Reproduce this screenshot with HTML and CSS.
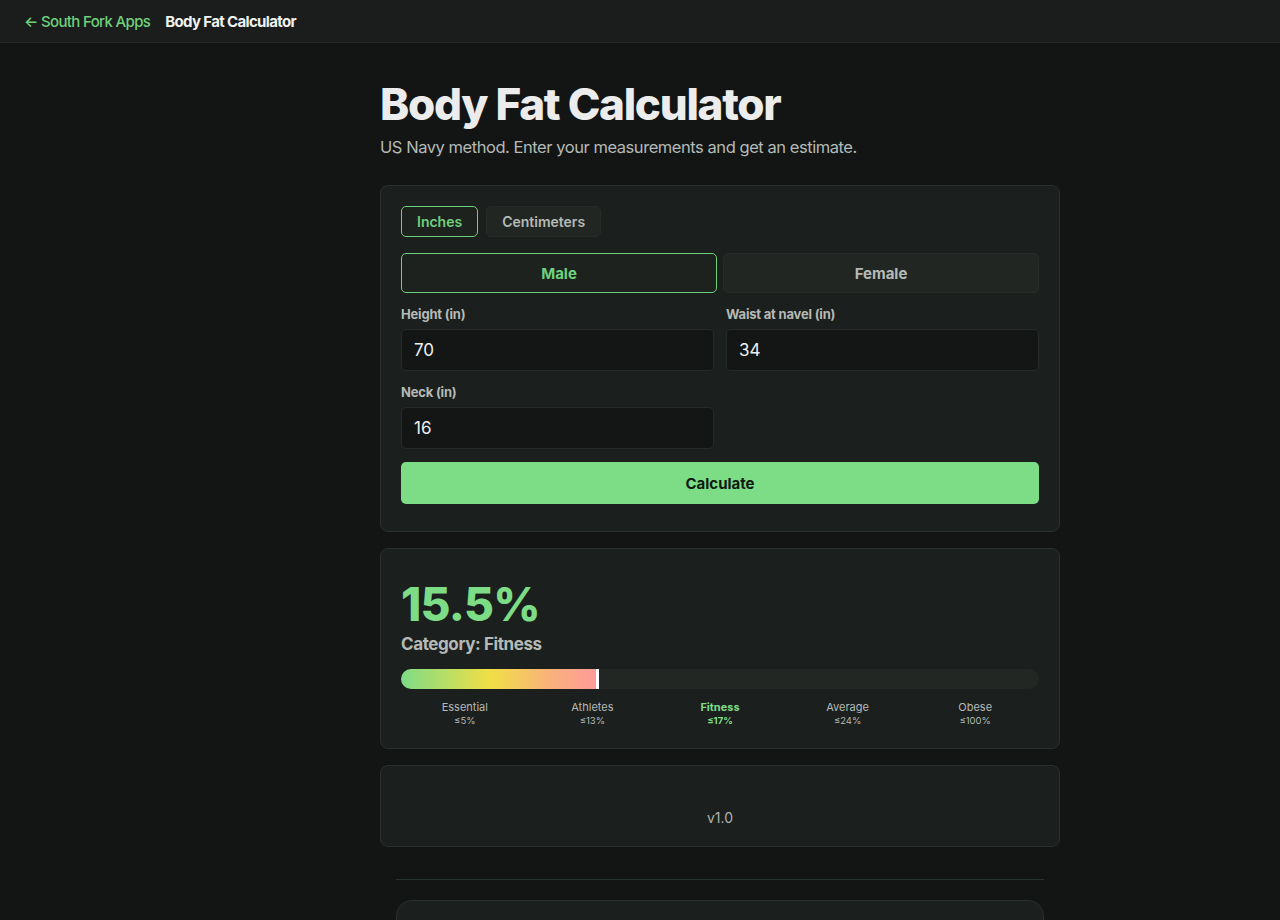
FILE: index.html
```html
<!DOCTYPE html>
<html lang="en">
<head>
<meta charset="utf-8">
<title>Body Fat Calculator</title>
<link rel="stylesheet" href="styles.css">
</head>
<body>
<header class="topbar">
  <a class="back" href="#">← South Fork Apps</a>
  <span class="topbar-title">Body Fat Calculator</span>
</header>
<div class="layout">
<main class="page">
  <h1 class="title">Body Fat Calculator</h1>
  <p class="subtitle">US Navy method. Enter your measurements and get an estimate.</p>

  <section class="card form-card">
    <div class="units">
      <button class="unit active">Inches</button>
      <button class="unit">Centimeters</button>
    </div>
    <div class="sex">
      <button class="sex-btn active">Male</button>
      <button class="sex-btn">Female</button>
    </div>
    <div class="fields">
      <label class="field">
        <span class="label">Height (in)</span>
        <span class="input">70</span>
      </label>
      <label class="field">
        <span class="label">Waist at navel (in)</span>
        <span class="input">34</span>
      </label>
      <label class="field">
        <span class="label">Neck (in)</span>
        <span class="input">16</span>
      </label>
    </div>
    <button class="calc">Calculate</button>
  </section>

  <section class="card result-card">
    <div class="pct">15.5%</div>
    <div class="category">Category: Fitness</div>
    <div class="bar">
      <div class="fill" style="width: 30.8%"></div>
      <div class="marker" style="left: 30.8%"></div>
    </div>
    <div class="scale">
      <div class="tick"><span>Essential</span><span>≤5%</span></div>
      <div class="tick"><span>Athletes</span><span>≤13%</span></div>
      <div class="tick current"><span>Fitness</span><span>≤17%</span></div>
      <div class="tick"><span>Average</span><span>≤24%</span></div>
      <div class="tick"><span>Obese</span><span>≤100%</span></div>
    </div>
  </section>

  <section class="card version-card">
    <span class="version">v1.0</span>
  </section>

  <hr class="divider">
  <div class="footer-card"></div>
</main>
</div>
</body>
</html>
```
FILE: styles.css
```css
* { box-sizing: border-box; }
html, body { margin: 0; }
body {
  background: #121514;
  color: #e8ebe9;
  font-family: Inter, "Noto Sans", sans-serif;
  height: 920px;
  overflow: hidden;
}
.topbar {
  height: 43px;
  border-bottom: 1px solid #262b28;
  background: #1a1d1b;
  display: flex;
  align-items: center;
  gap: 15px;
  padding: 0 24px;
  font-size: 15px;
  letter-spacing: -0.65px;
}
.back { color: #6fd07c; text-decoration: none; font-weight: 500; }
.topbar-title { color: #f0f2f1; font-weight: 700; }

.layout {
  padding-left: 160px;
}
.page {
  width: 680px;
  margin: 0 auto;
  padding-top: 35px;
}
.title {
  margin: 0;
  font-size: 44px;
  font-weight: 800;
  letter-spacing: -1.3px;
  line-height: 52px;
  color: #ececec;
}
.subtitle {
  margin: 5px 0 0;
  font-size: 16.5px;
  color: #b5bab6;
  letter-spacing: -0.45px;
  line-height: 24px;
}
.card {
  background: #1b1f1d;
  border: 1px solid #2b302d;
  border-radius: 8px;
}
.form-card {
  margin-top: 26px;
  padding: 20px 20px 27px;
}
button { font-family: inherit; cursor: pointer; }
.units { display: flex; gap: 8px; }
.unit {
  height: 31px;
  padding: 0 15px;
  background: #212623;
  border: 1px solid #272c29;
  border-radius: 5px;
  color: #b5bab6;
  font-size: 14px;
  font-weight: 600;
}
.unit.active { border-color: #6fd07c; color: #6fd07c; background: #1d221f; }
.sex {
  margin-top: 16px;
  display: grid;
  grid-template-columns: 1fr 1fr;
  gap: 6px;
}
.sex-btn {
  height: 40px;
  background: #212623;
  border: 1px solid #272c29;
  border-radius: 5px;
  color: #b5bab6;
  font-size: 15px;
  font-weight: 700;
}
.sex-btn.active { border-color: #6fd07c; color: #6fd07c; background: #1d221f; }
.fields {
  margin-top: 13px;
  display: grid;
  grid-template-columns: 1fr 1fr;
  column-gap: 12px;
  row-gap: 13px;
}
.field { display: flex; flex-direction: column; }
.label {
  font-size: 13px;
  font-weight: 700;
  color: #b5bab6;
  letter-spacing: -0.2px;
  line-height: 16px;
  margin-bottom: 7px;
}
.input {
  height: 42px;
  background: #131615;
  border: 1px solid #262b28;
  border-radius: 5px;
  padding: 0 12px;
  display: flex;
  align-items: center;
  font-size: 17px;
  color: #eef0ef;
}
.calc {
  margin-top: 13px;
  width: 100%;
  height: 42px;
  background: #7ddc86;
  border: none;
  border-radius: 5px;
  color: #0f1a11;
  font-size: 15px;
  font-weight: 700;
}
.result-card {
  margin-top: 16px;
  padding: 30px 20px 20px;
}
.pct {
  font-size: 46px;
  font-weight: 800;
  color: #7ddc86;
  line-height: 50px;
  letter-spacing: -0.8px;
}
.category {
  margin-top: 4px;
  font-size: 17px;
  font-weight: 700;
  color: #b5bab6;
  line-height: 22px;
  letter-spacing: -0.4px;
}
.bar {
  position: relative;
  margin-top: 14px;
  height: 20px;
  border-radius: 10px;
  background: #222724;
}
.fill {
  height: 100%;
  border-radius: 10px 3px 3px 10px;
  background: linear-gradient(90deg, #7ddc86 0%, #f0df45 45%, #f9b27a 75%, #ff9a9a 100%);
}
.marker {
  position: absolute;
  top: 0;
  width: 3px;
  height: 20px;
  margin-left: -2px;
  background: #ffffff;
}
.scale {
  margin-top: 11px;
  display: grid;
  grid-template-columns: repeat(5, 1fr);
}
.tick {
  display: flex;
  flex-direction: column;
  align-items: center;
  font-size: 11px;
  line-height: 14px;
  color: #b5bab6;
}
.tick span + span { font-size: 9.5px; }
.tick.current { color: #7ddc86; font-weight: 700; }
.version-card {
  margin-top: 16px;
  height: 82px;
  display: flex;
  align-items: flex-end;
  justify-content: center;
  padding-bottom: 20px;
}
.version {
  font-size: 14px;
  color: #aeb3af;
}
.divider {
  margin: 32px 16px 0;
  border: none;
  border-top: 1px solid #26352b;
}
.footer-card {
  margin: 20px 16px 0;
  height: 60px;
  background: #1b1f1d;
  border: 1px solid #2b302d;
  border-radius: 16px;
}
```
